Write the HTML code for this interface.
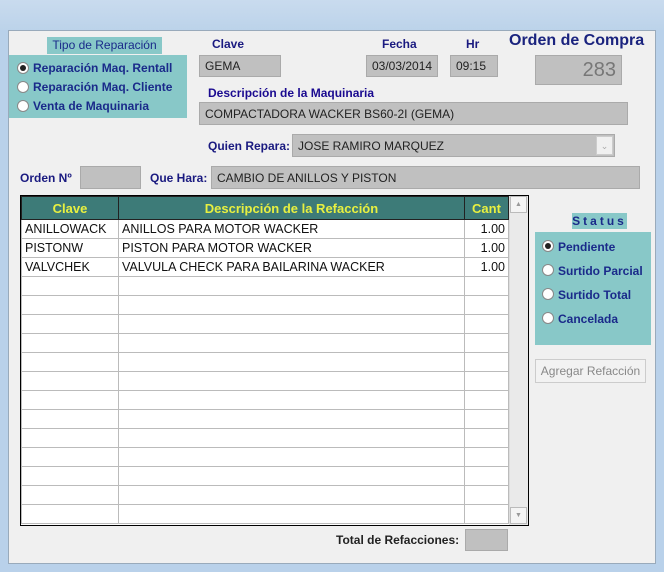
<!DOCTYPE html>
<html><head><meta charset="utf-8"><style>
*{margin:0;padding:0;box-sizing:border-box}
body{width:664px;height:572px;background:#b9d1ea;font-family:"Liberation Sans",Arial,sans-serif;position:relative;overflow:hidden}
.a{position:absolute}
.lbl{position:absolute;font-weight:bold;font-size:12px;color:#1a1a80}
.box{position:absolute;background:#c0c0c0;border:1px solid #aaa;font-size:12px;color:#222;padding:0 5px;display:flex;align-items:center}
.rad{position:absolute;width:12px;height:12px;border-radius:50%;background:#fff;border:1px solid #888}
.rad.on::after{content:"";position:absolute;left:2px;top:2px;width:6px;height:6px;border-radius:50%;background:#222}
.rt{position:absolute;font-size:12px;font-weight:bold;color:#1a2a8a}
table{border-collapse:collapse;font-size:12.5px;color:#111}
td{border:1px solid #bbb;height:19px;padding:0 3px;white-space:nowrap}
th{background:#3d7b78;color:#e8f040;height:23px;font-size:13px;border:1px solid #222}
</style></head><body>
<div class="a" style="left:0;top:0;width:664px;height:30px;background:linear-gradient(#c9dbee,#bcd3ea)"></div>
<div class="a" style="left:8px;top:30px;width:648px;height:534px;background:#f0f0f0;border:1px solid #9ab"></div>

<div class="a" style="left:9px;top:55px;width:178px;height:63px;background:#88c8c8"></div>
<div class="a" style="left:47px;top:37px;width:115px;height:17px;background:#88c8c8;font-size:12px;color:#1a2a8a;text-align:center;line-height:17px">Tipo de Reparación</div>
<div class="rad on" style="left:17px;top:62px"></div><div class="rt" style="left:33px;top:61px">Reparación Maq. Rentall</div>
<div class="rad" style="left:17px;top:81px"></div><div class="rt" style="left:33px;top:80px">Reparación Maq. Cliente</div>
<div class="rad" style="left:17px;top:100px"></div><div class="rt" style="left:33px;top:99px">Venta de Maquinaria</div>

<div class="lbl" style="left:212px;top:37px">Clave</div>
<div class="box" style="left:199px;top:55px;width:82px;height:22px">GEMA</div>
<div class="lbl" style="left:382px;top:37px">Fecha</div>
<div class="box" style="left:366px;top:55px;width:72px;height:22px">03/03/2014</div>
<div class="lbl" style="left:466px;top:37px">Hr</div>
<div class="box" style="left:450px;top:55px;width:48px;height:22px">09:15</div>
<div class="a" style="left:509px;top:32px;font-size:16px;font-weight:bold;color:#1a237e">Orden de Compra</div>
<div class="box" style="left:535px;top:55px;width:87px;height:30px;justify-content:flex-end;font-size:20px;color:#777">283</div>

<div class="lbl" style="left:208px;top:86px;color:#1a0a90">Descripción de la Maquinaria</div>
<div class="box" style="left:199px;top:102px;width:429px;height:23px">COMPACTADORA WACKER BS60-2I (GEMA)</div>
<div class="lbl" style="left:208px;top:139px">Quien Repara:</div>
<div class="box" style="left:292px;top:134px;width:323px;height:23px">JOSE RAMIRO MARQUEZ</div>
<div class="a" style="left:596px;top:136px;width:17px;height:19px;background:#f0f0f0;border:1px solid #ccc;font-size:9px;color:#aaa;text-align:center;line-height:18px">⌄</div>

<div class="lbl" style="left:20px;top:171px">Orden Nº</div>
<div class="box" style="left:80px;top:166px;width:61px;height:23px"></div>
<div class="lbl" style="left:150px;top:171px">Que Hara:</div>
<div class="box" style="left:211px;top:166px;width:429px;height:23px">CAMBIO DE ANILLOS Y PISTON</div>

<div class="a" style="left:20px;top:195px;width:509px;height:331px;background:#fff;border:1px solid #000;overflow:hidden">
<table style="width:488px">
<tr><th style="width:97px">Clave</th><th style="width:346px">Descripción de la Refacción</th><th>Cant</th></tr>
<tr><td>ANILLOWACK</td><td>ANILLOS PARA MOTOR WACKER</td><td style="text-align:right">1.00</td></tr>
<tr><td>PISTONW</td><td>PISTON PARA MOTOR WACKER</td><td style="text-align:right">1.00</td></tr>
<tr><td>VALVCHEK</td><td>VALVULA CHECK PARA BAILARINA WACKER</td><td style="text-align:right">1.00</td></tr>
<tr><td></td><td></td><td></td></tr><tr><td></td><td></td><td></td></tr><tr><td></td><td></td><td></td></tr>
<tr><td></td><td></td><td></td></tr><tr><td></td><td></td><td></td></tr><tr><td></td><td></td><td></td></tr>
<tr><td></td><td></td><td></td></tr><tr><td></td><td></td><td></td></tr><tr><td></td><td></td><td></td></tr>
<tr><td></td><td></td><td></td></tr><tr><td></td><td></td><td></td></tr><tr><td></td><td></td><td></td></tr>
<tr><td></td><td></td><td></td></tr>
</table>
<div class="a" style="left:488px;top:0;width:19px;height:329px;background:#eaeaea;border-left:1px solid #ddd"></div>
<div class="a" style="left:489px;top:0;width:17px;height:17px;background:#f4f4f4;border:1px solid #bbb;font-size:7px;color:#999;text-align:center;line-height:15px">▲</div>
<div class="a" style="left:489px;top:311px;width:17px;height:17px;background:#f4f4f4;border:1px solid #bbb;font-size:7px;color:#999;text-align:center;line-height:15px">▼</div>
</div>

<div class="a" style="left:572px;top:213px;width:55px;height:16px;background:#88c8c8;font-size:12px;font-weight:bold;color:#1a2a8a;text-align:center;letter-spacing:3px;line-height:16px">Status</div>
<div class="a" style="left:535px;top:232px;width:116px;height:113px;background:#88c8c8"></div>
<div class="rad on" style="left:542px;top:240px"></div><div class="rt" style="left:558px;top:240px">Pendiente</div>
<div class="rad" style="left:542px;top:264px"></div><div class="rt" style="left:558px;top:264px">Surtido Parcial</div>
<div class="rad" style="left:542px;top:288px"></div><div class="rt" style="left:558px;top:288px">Surtido Total</div>
<div class="rad" style="left:542px;top:312px"></div><div class="rt" style="left:558px;top:312px">Cancelada</div>
<div class="a" style="left:535px;top:359px;width:111px;height:24px;border:1px solid #ccc;background:#f2f2f2;font-size:12px;color:#888;text-align:center;line-height:22px">Agregar Refacción</div>

<div class="lbl" style="left:336px;top:533px;color:#222">Total de Refacciones:</div>
<div class="box" style="left:465px;top:529px;width:43px;height:22px"></div>
</body></html>
